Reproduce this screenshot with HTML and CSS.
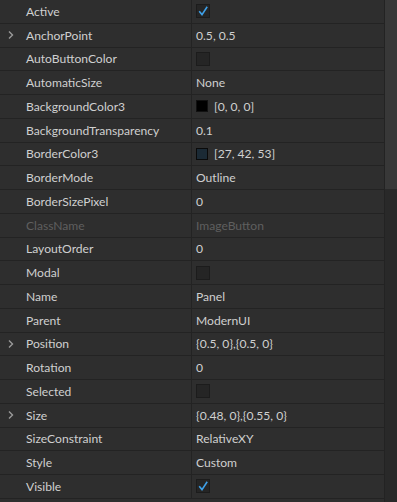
FILE: index.html
```html
<!DOCTYPE html>
<html>
<head>
<meta charset="utf-8">
<link rel="stylesheet" href="styles.css">
</head>
<body>
<div class="panel">
  <div class="list">
    <div class="row"><div class="name"><span class="exp"></span>Active</div><div class="val"><span class="check on"><svg viewBox="0 0 14 14"><polyline points="3.2,7.2 6,10.6 11.2,2.8"/></svg></span></div></div>
    <div class="row"><div class="name"><span class="exp"><svg viewBox="0 0 8 10"><polyline points="2,1.5 5.5,5 2,8.5"/></svg></span>AnchorPoint</div><div class="val">0.5, 0.5</div></div>
    <div class="row"><div class="name"><span class="exp"></span>AutoButtonColor</div><div class="val"><span class="check"></span></div></div>
    <div class="row"><div class="name"><span class="exp"></span>AutomaticSize</div><div class="val">None</div></div>
    <div class="row"><div class="name"><span class="exp"></span>BackgroundColor3</div><div class="val"><span class="swatch black"></span>[0, 0, 0]</div></div>
    <div class="row"><div class="name"><span class="exp"></span>BackgroundTransparency</div><div class="val">0.1</div></div>
    <div class="row"><div class="name"><span class="exp"></span>BorderColor3</div><div class="val"><span class="swatch navy"></span>[27, 42, 53]</div></div>
    <div class="row"><div class="name"><span class="exp"></span>BorderMode</div><div class="val">Outline</div></div>
    <div class="row"><div class="name"><span class="exp"></span>BorderSizePixel</div><div class="val">0</div></div>
    <div class="row dim"><div class="name"><span class="exp"></span>ClassName</div><div class="val">ImageButton</div></div>
    <div class="row"><div class="name"><span class="exp"></span>LayoutOrder</div><div class="val">0</div></div>
    <div class="row"><div class="name"><span class="exp"></span>Modal</div><div class="val"><span class="check"></span></div></div>
    <div class="row"><div class="name"><span class="exp"></span>Name</div><div class="val">Panel</div></div>
    <div class="row"><div class="name"><span class="exp"></span>Parent</div><div class="val">ModernUI</div></div>
    <div class="row"><div class="name"><span class="exp"><svg viewBox="0 0 8 10"><polyline points="2,1.5 5.5,5 2,8.5"/></svg></span>Position</div><div class="val">{0.5, 0},{0.5, 0}</div></div>
    <div class="row"><div class="name"><span class="exp"></span>Rotation</div><div class="val">0</div></div>
    <div class="row"><div class="name"><span class="exp"></span>Selected</div><div class="val"><span class="check"></span></div></div>
    <div class="row"><div class="name"><span class="exp"><svg viewBox="0 0 8 10"><polyline points="2,1.5 5.5,5 2,8.5"/></svg></span>Size</div><div class="val">{0.48, 0},{0.55, 0}</div></div>
    <div class="row"><div class="name"><span class="exp"></span>SizeConstraint</div><div class="val">RelativeXY</div></div>
    <div class="row"><div class="name"><span class="exp"></span>Style</div><div class="val">Custom</div></div>
    <div class="row"><div class="name"><span class="exp"></span>Visible</div><div class="val"><span class="check on"><svg viewBox="0 0 14 14"><polyline points="3.2,7.2 6,10.6 11.2,2.8"/></svg></span></div></div>
  </div>
  <div class="scroll"><div class="thumb"></div></div>
</div>
</body>
</html>
```
FILE: styles.css
```css
html, body {
  margin: 0;
  padding: 0;
  background: #2e2e2e;
}
body {
  width: 397px;
  height: 502px;
  overflow: hidden;
  font-family: Lato, "Liberation Sans", sans-serif;
  font-size: 12.1px;
  color: #d0d0d0;
}
.panel {
  display: flex;
  height: 502px;
}
.list {
  width: 384px;
  flex: none;
}
.row {
  display: grid;
  grid-template-columns: 192px 1fr;
  height: 23.75px;
  box-sizing: border-box;
  border-bottom: 1px solid #232323;
}
.name {
  display: flex;
  align-items: center;
  border-right: 1px solid #232323;
  white-space: nowrap;
}
.exp {
  width: 26px;
  flex: none;
  display: flex;
  align-items: center;
  padding-left: 7px;
  box-sizing: border-box;
}
.exp svg {
  width: 8px;
  height: 10px;
}
.exp polyline {
  fill: none;
  stroke: #9a9a9a;
  stroke-width: 1.4;
}
.val {
  display: flex;
  align-items: center;
  padding-left: 4px;
  white-space: nowrap;
}
.dim {
  color: #5f5f5f;
}
.check {
  width: 14px;
  height: 14px;
  box-sizing: border-box;
  background: #252525;
  border: 1px solid #1c1c1c;
  display: block;
}
.check svg {
  width: 14px;
  height: 14px;
  margin: -1px;
  display: block;
}
.check polyline {
  fill: none;
  stroke: #3ea0e8;
  stroke-width: 1.6;
}
.swatch {
  width: 12px;
  height: 12px;
  box-sizing: border-box;
  border: 1px solid #111;
  margin-right: 6px;
  flex: none;
}
.swatch.black { background: #000; }
.swatch.navy { background: #1b2a35; border-color: #0a0a0a; }
.scroll {
  flex: 1;
  background: #292929;
  border-left: 1px solid #232323;
}
.thumb {
  height: 189px;
  background: #383838;
}
```
